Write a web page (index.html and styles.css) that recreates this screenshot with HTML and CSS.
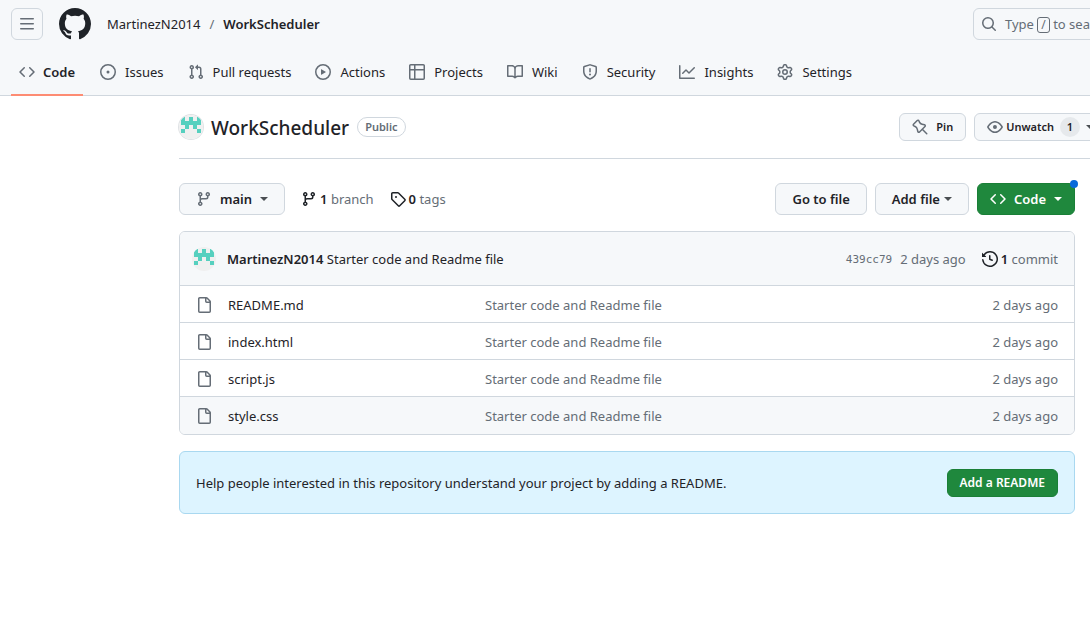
FILE: index.html
```html
<!DOCTYPE html>
<html lang="en">
<head>
<meta charset="utf-8">
<title>MartinezN2014/WorkScheduler</title>
<link rel="stylesheet" href="styles.css">
</head>
<body>
<svg class="sprite" aria-hidden="true">
  <symbol id="i-menu" viewBox="0 0 16 16"><path d="M1 2.75A.75.75 0 0 1 1.75 2h12.5a.75.75 0 0 1 0 1.5H1.75A.75.75 0 0 1 1 2.75Zm0 5A.75.75 0 0 1 1.75 7h12.5a.75.75 0 0 1 0 1.5H1.75A.75.75 0 0 1 1 7.75ZM1.75 12h12.5a.75.75 0 0 1 0 1.5H1.75a.75.75 0 0 1 0-1.5Z"/></symbol>
  <symbol id="i-mark" viewBox="0 0 16 16"><path d="M8 0c4.42 0 8 3.58 8 8a8.013 8.013 0 0 1-5.45 7.59c-.4.08-.55-.17-.55-.38 0-.27.01-1.13.01-2.2 0-.75-.25-1.23-.54-1.48 1.78-.2 3.65-.88 3.65-3.95 0-.88-.31-1.59-.82-2.15.08-.2.36-1.02-.08-2.12 0 0-.67-.22-2.2.82-.64-.18-1.32-.27-2-.27-.68 0-1.36.09-2 .27-1.53-1.03-2.2-.82-2.2-.82-.44 1.1-.16 1.92-.08 2.12-.51.56-.82 1.28-.82 2.15 0 3.06 1.86 3.75 3.64 3.95-.23.2-.44.55-.51 1.07-.46.21-1.61.55-2.33-.66-.15-.24-.6-.83-1.23-.82-.67.01-.27.38.01.53.34.19.73.9.82 1.13.16.45.68 1.31 2.69.94 0 .67.01 1.3.01 1.49 0 .21-.15.45-.55.38A7.995 7.995 0 0 1 0 8c0-4.42 3.58-8 8-8Z"/></symbol>
  <symbol id="i-code" viewBox="0 0 16 16"><path d="m11.28 3.22 4.25 4.25a.75.75 0 0 1 0 1.06l-4.25 4.25a.749.749 0 0 1-1.275-.326.749.749 0 0 1 .215-.734L13.94 8l-3.72-3.72a.749.749 0 0 1 .326-1.275.749.749 0 0 1 .734.215Zm-6.56 0a.751.751 0 0 1 1.042.018.751.751 0 0 1 .018 1.042L2.06 8l3.72 3.72a.749.749 0 0 1-.326 1.275.749.749 0 0 1-.734-.215L.47 8.53a.75.75 0 0 1 0-1.06Z"/></symbol>
  <symbol id="i-issue" viewBox="0 0 16 16"><path d="M8 9.5a1.5 1.5 0 1 0 0-3 1.5 1.5 0 0 0 0 3Z"/><path d="M8 0a8 8 0 1 1 0 16A8 8 0 0 1 8 0ZM1.5 8a6.5 6.5 0 1 0 13 0 6.5 6.5 0 0 0-13 0Z"/></symbol>
  <symbol id="i-pull" viewBox="0 0 16 16"><path d="M1.5 3.25a2.25 2.25 0 1 1 3 2.122v5.256a2.251 2.251 0 1 1-1.5 0V5.372A2.25 2.25 0 0 1 1.5 3.25Zm5.677-.177L9.573.677A.25.25 0 0 1 10 .854V2.5h1A2.5 2.5 0 0 1 13.5 5v5.628a2.251 2.251 0 1 1-1.5 0V5a1 1 0 0 0-1-1h-1v1.646a.25.25 0 0 1-.427.177L7.177 3.427a.25.25 0 0 1 0-.354ZM3.75 2.5a.75.75 0 1 0 0 1.5.75.75 0 0 0 0-1.5Zm0 9.5a.75.75 0 1 0 0 1.5.75.75 0 0 0 0-1.5Zm8.25.75a.75.75 0 1 0 1.5 0 .75.75 0 0 0-1.5 0Z"/></symbol>
  <symbol id="i-play" viewBox="0 0 16 16"><path d="M8 0a8 8 0 1 1 0 16A8 8 0 0 1 8 0ZM1.5 8a6.5 6.5 0 1 0 13 0 6.5 6.5 0 0 0-13 0Zm4.879-2.773 4.264 2.559a.25.25 0 0 1 0 .428l-4.264 2.559A.25.25 0 0 1 6 10.559V5.442a.25.25 0 0 1 .379-.215Z"/></symbol>
  <symbol id="i-table" viewBox="0 0 16 16"><path d="M0 1.75C0 .784.784 0 1.75 0h12.5C15.216 0 16 .784 16 1.75v12.5A1.75 1.75 0 0 1 14.25 16H1.75A1.75 1.75 0 0 1 0 14.25ZM6.5 6.5v8h7.75a.25.25 0 0 0 .25-.25V6.5Zm8-1.5V1.75a.25.25 0 0 0-.25-.25H6.5V5Zm-13 1.5v7.75c0 .138.112.25.25.25H5v-8ZM5 5V1.5H1.75a.25.25 0 0 0-.25.25V5Z"/></symbol>
  <symbol id="i-book" viewBox="0 0 16 16"><path d="M0 1.75A.75.75 0 0 1 .75 1h4.253c1.227 0 2.317.59 3 1.501A3.743 3.743 0 0 1 11.006 1h4.245a.75.75 0 0 1 .75.75v10.5a.75.75 0 0 1-.75.75h-4.507a2.25 2.25 0 0 0-1.591.659l-.622.621a.75.75 0 0 1-1.06 0l-.622-.621A2.25 2.25 0 0 0 5.258 13H.75a.75.75 0 0 1-.75-.75Zm7.251 10.324.004-5.073-.002-2.253A2.25 2.25 0 0 0 5.003 2.5H1.5v9h3.757a3.75 3.75 0 0 1 1.994.574ZM8.755 4.75l-.004 7.322a3.752 3.752 0 0 1 1.992-.572H14.5v-9h-3.495a2.25 2.25 0 0 0-2.25 2.25Z"/></symbol>
  <symbol id="i-shield" viewBox="0 0 16 16"><path d="M7.467.133a1.748 1.748 0 0 1 1.066 0l5.25 1.68A1.75 1.75 0 0 1 15 3.48V7c0 1.566-.32 3.182-1.303 4.682-.983 1.498-2.585 2.813-5.032 3.855a1.697 1.697 0 0 1-1.33 0c-2.447-1.042-4.049-2.357-5.032-3.855C1.32 10.182 1 8.566 1 7V3.48a1.75 1.75 0 0 1 1.217-1.667Zm.61 1.429a.25.25 0 0 0-.153 0l-5.25 1.68a.25.25 0 0 0-.174.238V7c0 1.358.275 2.666 1.057 3.86.784 1.194 2.121 2.34 4.366 3.297a.196.196 0 0 0 .154 0c2.245-.956 3.582-2.104 4.366-3.298C13.225 9.666 13.5 8.36 13.5 7V3.48a.251.251 0 0 0-.174-.237l-5.25-1.68ZM8.75 4.75v3a.75.75 0 0 1-1.5 0v-3a.75.75 0 0 1 1.5 0ZM9 10.5a1 1 0 1 1-2 0 1 1 0 0 1 2 0Z"/></symbol>
  <symbol id="i-graph" viewBox="0 0 16 16"><path d="M1.5 1.75V13.5h13.75a.75.75 0 0 1 0 1.5H.75a.75.75 0 0 1-.75-.75V1.75a.75.75 0 0 1 1.5 0Zm14.28 2.53-5.25 5.25a.75.75 0 0 1-1.06 0L7 7.06 4.28 9.78a.751.751 0 0 1-1.042-.018.751.751 0 0 1-.018-1.042l3.25-3.25a.75.75 0 0 1 1.06 0L10 7.94l4.72-4.72a.751.751 0 0 1 1.042.018.751.751 0 0 1 .018 1.042Z"/></symbol>
  <symbol id="i-gear" viewBox="0 0 16 16"><path d="M8 0a8.2 8.2 0 0 1 .701.031C9.444.095 9.99.645 10.16 1.29l.288 1.107c.018.066.079.158.212.224.231.114.454.243.668.386.123.082.233.09.299.071l1.103-.303c.644-.176 1.392.021 1.82.63.27.385.506.792.704 1.218.315.675.111 1.422-.364 1.891l-.814.806c-.049.048-.098.147-.088.294.016.257.016.515 0 .772-.01.147.038.246.088.294l.814.806c.475.469.679 1.216.364 1.891a7.977 7.977 0 0 1-.704 1.217c-.428.61-1.176.807-1.82.63l-1.102-.302c-.067-.019-.177-.011-.3.071a5.909 5.909 0 0 1-.668.386c-.133.066-.194.158-.211.224l-.29 1.106c-.168.646-.715 1.196-1.458 1.26a8.006 8.006 0 0 1-1.402 0c-.743-.064-1.289-.614-1.458-1.26l-.289-1.106c-.018-.066-.079-.158-.212-.224a5.738 5.738 0 0 1-.668-.386c-.123-.082-.233-.09-.299-.071l-1.103.303c-.644.176-1.392-.021-1.82-.63a8.12 8.12 0 0 1-.704-1.218c-.315-.675-.111-1.422.363-1.891l.815-.806c.05-.048.098-.147.088-.294a6.214 6.214 0 0 1 0-.772c.01-.147-.038-.246-.088-.294l-.815-.806C.635 6.045.431 5.298.746 4.623a7.92 7.92 0 0 1 .704-1.217c.428-.61 1.176-.807 1.82-.63l1.102.302c.067.019.177.011.3-.071.214-.143.437-.272.668-.386.133-.066.194-.158.211-.224l.29-1.106C6.009.645 6.556.095 7.299.03 7.53.01 7.764 0 8 0Zm-.571 1.525c-.036.003-.108.036-.137.146l-.289 1.105c-.147.561-.549.967-.998 1.189-.173.086-.34.183-.5.29-.417.278-.97.423-1.529.27l-1.103-.303c-.109-.03-.175.016-.195.045-.22.312-.412.644-.573.99-.014.031-.021.11.059.19l.815.806c.411.406.562.957.53 1.456a4.709 4.709 0 0 0 0 .582c.032.499-.119 1.05-.53 1.456l-.815.806c-.081.08-.073.159-.059.19.162.346.353.677.573.989.02.03.085.076.195.046l1.102-.303c.56-.153 1.113-.008 1.53.27.161.107.328.204.501.29.447.222.85.629.997 1.189l.289 1.105c.029.109.101.143.137.146a6.6 6.6 0 0 0 1.142 0c.036-.003.108-.036.137-.146l.289-1.105c.147-.561.549-.967.998-1.189.173-.086.34-.183.5-.29.417-.278.97-.423 1.529-.27l1.103.303c.109.029.175-.016.195-.045.22-.313.411-.644.573-.99.014-.031.021-.11-.059-.19l-.815-.806c-.411-.406-.562-.957-.53-1.456a4.709 4.709 0 0 0 0-.582c-.032-.499.119-1.05.53-1.456l.815-.806c.081-.08.073-.159.059-.19a6.464 6.464 0 0 0-.573-.989c-.02-.03-.085-.076-.195-.046l-1.102.303c-.56.153-1.113.008-1.53-.27a4.44 4.44 0 0 0-.501-.29c-.447-.222-.85-.629-.997-1.189l-.289-1.105c-.029-.11-.101-.143-.137-.146a6.6 6.6 0 0 0-1.142 0ZM11 8a3 3 0 1 1-6 0 3 3 0 0 1 6 0ZM9.5 8a1.5 1.5 0 1 0-3.001.001A1.5 1.5 0 0 0 9.5 8Z"/></symbol>
  <symbol id="i-search" viewBox="0 0 16 16"><path d="M10.68 11.74a6 6 0 0 1-7.922-8.982 6 6 0 0 1 8.982 7.922l3.04 3.04a.749.749 0 0 1-.326 1.275.749.749 0 0 1-.734-.215ZM11.5 7a4.499 4.499 0 1 0-8.997 0A4.499 4.499 0 0 0 11.5 7Z"/></symbol>
  <symbol id="i-pin" viewBox="0 0 16 16"><path d="m11.294.984 3.722 3.722a1.75 1.75 0 0 1-.504 2.826l-1.327.613a3.089 3.089 0 0 0-1.707 2.084l-.584 2.454c-.317 1.332-1.972 1.8-2.94.832L5.75 11.311 1.78 15.28a.749.749 0 1 1-1.06-1.06l3.969-3.97-2.204-2.204c-.968-.968-.5-2.623.832-2.94l2.454-.584a3.08 3.08 0 0 0 2.084-1.707l.613-1.327a1.75 1.75 0 0 1 2.826-.504ZM6.283 9.723l2.732 2.731a.25.25 0 0 0 .42-.119l.584-2.454a4.586 4.586 0 0 1 2.537-3.098l1.328-.613a.25.25 0 0 0 .072-.404l-3.722-3.722a.25.25 0 0 0-.404.072l-.613 1.328a4.584 4.584 0 0 1-3.098 2.537l-2.454.584a.25.25 0 0 0-.119.42l2.731 2.732Z"/></symbol>
  <symbol id="i-eye" viewBox="0 0 16 16"><path d="M8 2c1.981 0 3.671.992 4.933 2.078 1.27 1.091 2.187 2.345 2.637 3.023a1.62 1.62 0 0 1 0 1.798c-.45.678-1.367 1.932-2.637 3.023C11.67 13.008 9.981 14 8 14c-1.981 0-3.671-.992-4.933-2.078C1.797 10.83.88 9.576.43 8.898a1.62 1.62 0 0 1 0-1.798c.45-.677 1.367-1.931 2.637-3.022C4.33 2.992 6.019 2 8 2ZM1.679 7.932a.12.12 0 0 0 0 .136c.411.622 1.241 1.75 2.366 2.717C5.176 11.758 6.527 12.5 8 12.5c1.473 0 2.825-.742 3.955-1.715 1.124-.967 1.954-2.096 2.366-2.717a.12.12 0 0 0 0-.136c-.412-.621-1.242-1.75-2.366-2.717C10.824 4.242 9.473 3.5 8 3.5c-1.473 0-2.825.742-3.955 1.715-1.124.967-1.954 2.096-2.366 2.717ZM8 10a2 2 0 1 1-.001-3.999A2 2 0 0 1 8 10Z"/></symbol>
  <symbol id="i-branch" viewBox="0 0 16 16"><path d="M9.5 3.25a2.25 2.25 0 1 1 3 2.122V6A2.5 2.5 0 0 1 10 8.5H6a1 1 0 0 0-1 1v1.128a2.251 2.251 0 1 1-1.5 0V5.372a2.25 2.25 0 1 1 1.5 0v1.836A2.493 2.493 0 0 1 6 7h4a1 1 0 0 0 1-1v-.628A2.25 2.25 0 0 1 9.5 3.25Zm-6 0a.75.75 0 1 0 1.5 0 .75.75 0 0 0-1.5 0Zm8.25-.75a.75.75 0 1 0 0 1.5.75.75 0 0 0 0-1.5ZM4.25 12a.75.75 0 1 0 0 1.5.75.75 0 0 0 0-1.5Z"/></symbol>
  <symbol id="i-tag" viewBox="0 0 16 16"><path d="M1 7.775V2.75C1 1.784 1.784 1 2.75 1h5.025c.464 0 .91.184 1.238.513l6.25 6.25a1.75 1.75 0 0 1 0 2.474l-5.026 5.026a1.75 1.75 0 0 1-2.474 0l-6.25-6.25A1.752 1.752 0 0 1 1 7.775Zm1.5 0c0 .066.026.13.073.177l6.25 6.25a.25.25 0 0 0 .354 0l5.025-5.025a.25.25 0 0 0 0-.354l-6.25-6.25a.25.25 0 0 0-.177-.073H2.75a.25.25 0 0 0-.25.25ZM6 5a1 1 0 1 1 0 2 1 1 0 0 1 0-2Z"/></symbol>
  <symbol id="i-history" viewBox="0 0 16 16"><path d="m.427 1.927 1.215 1.215a8.002 8.002 0 1 1-1.6 5.685.75.75 0 1 1 1.493-.154 6.5 6.5 0 1 0 1.18-4.458l1.358 1.358A.25.25 0 0 1 3.896 6H.25A.25.25 0 0 1 0 5.75V2.104a.25.25 0 0 1 .427-.177ZM7.75 4a.75.75 0 0 1 .75.75v2.992l2.028.812a.75.75 0 0 1-.557 1.392l-2.5-1A.751.751 0 0 1 7 8.25v-3.5A.75.75 0 0 1 7.75 4Z"/></symbol>
  <symbol id="i-file" viewBox="0 0 16 16"><path d="M2 1.75C2 .784 2.784 0 3.75 0h6.586c.464 0 .909.184 1.237.513l2.914 2.914c.329.328.513.773.513 1.237v9.586A1.75 1.75 0 0 1 13.25 16h-9.5A1.75 1.75 0 0 1 2 14.25Zm1.75-.25a.25.25 0 0 0-.25.25v12.5c0 .138.112.25.25.25h9.5a.25.25 0 0 0 .25-.25V6h-2.75A1.75 1.75 0 0 1 9 4.25V1.5Zm6.75.062V4.25c0 .138.112.25.25.25h2.688l-.011-.013-2.914-2.914-.013-.011Z"/></symbol>
  <symbol id="i-avatar" viewBox="0 0 12 12"><path fill="#f0f0f0" d="M0 0h12v12H0z"/><path fill="#56d0bf" d="M1 1h2v2H1zM5 1h2v2H5zM9 1h2v2H9zM1 3h10v2H1zM3 5h2v2H3zM7 5h2v2H7zM1 7h2v2H1zM9 7h2v2H9z"/></symbol>
</svg>

<header class="top">
  <div class="bar">
    <button class="menu" aria-label="Open menu"><svg class="icon"><use href="#i-menu"/></svg></button>
    <a class="mark" href="#" aria-label="Homepage"><svg><use href="#i-mark"/></svg></a>
    <nav class="crumbs" aria-label="Breadcrumb"><a href="#">MartinezN2014</a><span class="slash">/</span><a class="strong" href="#">WorkScheduler</a></nav>
    <button class="search"><svg class="icon"><use href="#i-search"/></svg><span>Type <kbd>/</kbd> to search</span></button>
  </div>
  <nav class="tabs" aria-label="Repository">
    <a class="tab current" href="#"><svg class="icon"><use href="#i-code"/></svg>Code</a>
    <a class="tab" href="#"><svg class="icon"><use href="#i-issue"/></svg>Issues</a>
    <a class="tab" href="#"><svg class="icon"><use href="#i-pull"/></svg>Pull requests</a>
    <a class="tab" href="#"><svg class="icon"><use href="#i-play"/></svg>Actions</a>
    <a class="tab" href="#"><svg class="icon"><use href="#i-table"/></svg>Projects</a>
    <a class="tab" href="#"><svg class="icon"><use href="#i-book"/></svg>Wiki</a>
    <a class="tab" href="#"><svg class="icon"><use href="#i-shield"/></svg>Security</a>
    <a class="tab" href="#"><svg class="icon"><use href="#i-graph"/></svg>Insights</a>
    <a class="tab" href="#"><svg class="icon"><use href="#i-gear"/></svg>Settings</a>
  </nav>
</header>

<main class="page">
  <div class="title">
    <svg class="avatar"><use href="#i-avatar"/></svg>
    <h1><a href="#">WorkScheduler</a></h1>
    <span class="label">Public</span>
    <div class="actions">
      <button class="btn small pin"><svg class="icon flip"><use href="#i-pin"/></svg>Pin</button>
      <button class="btn small watch"><svg class="icon"><use href="#i-eye"/></svg>Unwatch<span class="count">1</span><span class="caret"></span></button>
    </div>
  </div>

  <div class="content">
    <div class="tools">
      <button class="btn branch"><svg class="icon"><use href="#i-branch"/></svg>main<span class="caret"></span></button>
      <a class="stat" href="#"><svg class="icon"><use href="#i-branch"/></svg><span><b>1</b> branch</span></a>
      <a class="stat" href="#"><svg class="icon"><use href="#i-tag"/></svg><span><b>0</b> tags</span></a>
      <div class="right">
        <button class="btn">Go to file</button>
        <button class="btn add">Add file<span class="caret"></span></button>
        <button class="btn green code"><svg class="icon"><use href="#i-code"/></svg>Code<span class="caret"></span><span class="dot"></span></button>
      </div>
    </div>

    <section class="box" aria-label="Files">
      <div class="commit">
        <svg class="avatar mini"><use href="#i-avatar"/></svg>
        <div class="message"><a class="strong" href="#">MartinezN2014</a> <a href="#">Starter code and Readme file</a></div>
        <a class="sha" href="#">439cc79</a>
        <span class="muted">2 days ago</span>
        <a class="stat" href="#"><svg class="icon"><use href="#i-history"/></svg><span><b>1</b> commit</span></a>
      </div>
      <table class="files">
        <tr><td class="kind"><svg class="icon"><use href="#i-file"/></svg></td><td class="name"><a href="#">README.md</a></td><td class="muted">Starter code and Readme file</td><td class="age">2 days ago</td></tr>
        <tr><td class="kind"><svg class="icon"><use href="#i-file"/></svg></td><td class="name"><a href="#">index.html</a></td><td class="muted">Starter code and Readme file</td><td class="age">2 days ago</td></tr>
        <tr><td class="kind"><svg class="icon"><use href="#i-file"/></svg></td><td class="name"><a href="#">script.js</a></td><td class="muted">Starter code and Readme file</td><td class="age">2 days ago</td></tr>
        <tr class="active"><td class="kind"><svg class="icon"><use href="#i-file"/></svg></td><td class="name"><a href="#">style.css</a></td><td class="muted">Starter code and Readme file</td><td class="age">2 days ago</td></tr>
      </table>
    </section>

    <section class="notice">
      <p>Help people interested in this repository understand your project by adding a README.</p>
      <button class="btn small green readme">Add a README</button>
    </section>
  </div>
</main>
</body>
</html>
```
FILE: styles.css
```css
* { box-sizing: border-box; }
body {
  margin: 0;
  overflow-x: hidden;
  background: #fff;
  color: #1f2328;
  font: 13px/20px "Noto Sans", "Open Sans", sans-serif;
}
a { color: inherit; text-decoration: none; }
button { font: inherit; color: inherit; cursor: pointer; }
.sprite { position: absolute; width: 0; height: 0; }
.icon { flex: none; width: 16px; height: 16px; fill: #656d76; }
.strong, b { font-weight: 600; }
b { color: #1f2328; }
.muted { color: #656d76; }

.top { background: #f6f8fa; border-bottom: 1px solid #d0d7de; }
.bar { display: flex; align-items: center; height: 48px; padding-left: 11px; overflow: hidden; }
.menu {
  display: grid; place-items: center;
  width: 32px; height: 32px; padding: 0;
  background: none; border: 1px solid #d0d7de; border-radius: 6px;
}
.mark { margin: 0 16px; height: 32px; }
.mark svg { width: 32px; height: 32px; fill: #1f2328; }
.crumbs { display: flex; gap: 9px; }
.slash { color: #656d76; }
.search {
  display: flex; align-items: center; gap: 8px; flex: none;
  width: 320px; height: 32px; margin: 0 -203px 0 auto; padding: 0 7px;
  background: none; border: 1px solid #d0d7de; border-radius: 6px;
  color: #656d76;
}
kbd {
  font: inherit; font-size: 12px; line-height: 14px; display: inline-block;
  padding: 0 3px; border: 1px solid #656d76; border-radius: 3px;
}
.tabs { display: flex; gap: 8px; height: 48px; padding-left: 11px; margin-bottom: -1px; }
.tab {
  display: flex; align-items: center; gap: 9px;
  padding: 2px 8px 0; border-bottom: 2px solid transparent; white-space: nowrap;
}
.current { gap: 8px; border-color: #fd8c73; font-weight: 600; }
.current + .tab { margin-left: 1px; }

.page { padding: 16px 15px 0 179px; }
.title {
  display: flex; align-items: center; gap: 8px;
  height: 47px; padding-bottom: 16px; margin-right: -15px;
  border-bottom: 1px solid #d0d7de;
}
.avatar { flex: none; width: 24px; height: 24px; border-radius: 50%; box-shadow: 0 0 0 1px #dfe2e5; }
.mini { box-shadow: none; }
h1 { margin: 0; padding-top: 2px; font-size: 19px; line-height: 28px; font-weight: 500; }
.label {
  padding: 0 7px; border: 1px solid #d0d7de; border-radius: 10px;
  color: #656d76; font-size: 11px; line-height: 18px; font-weight: 600;
}
.actions { display: flex; gap: 8px; margin-left: auto; margin-right: -17px; }

.btn {
  display: flex; align-items: center; justify-content: center; gap: 8px;
  height: 32px; padding: 0 16px; white-space: nowrap;
  background: #f6f8fa; border: 1px solid #d0d7de; border-radius: 6px;
  font-weight: 600;
}
.small { height: 28px; padding: 0 12px; font-size: 11px; }
.watch { gap: 3px; }
.flip { transform: scaleX(-1); }
.count {
  min-width: 20px; margin: 0 3px; border-radius: 10px;
  background: #e6e9ec; line-height: 20px;
}
.caret { border: 4px solid transparent; border-top-color: currentColor; border-bottom: 0; opacity: .8; }
.add { gap: 4px; }
.green { background: #1f883d; border-color: #1a7f37; color: #fff; font-weight: 600; }
.green .icon { fill: #fff; }
.green .caret { opacity: 1; }
.readme { font-size: 12px; }
.code { position: relative; padding: 0 12px; }
.dot {
  position: absolute; top: -4px; right: -4px;
  width: 8px; height: 8px; border-radius: 50%; background: #0969da;
}

.content { padding-top: 24px; }
.tools { display: flex; align-items: center; gap: 16px; }
.right { display: flex; gap: 8px; margin-left: auto; }
.stat { display: flex; align-items: center; gap: 3px; color: #656d76; }
.stat .icon { fill: #1f2328; }

.box { margin: 16px 0; border: 1px solid #d0d7de; border-radius: 6px; overflow: hidden; }
.commit { display: flex; align-items: center; gap: 8px; height: 53px; padding: 0 16px 0 12px; background: #f6f8fa; }
.message { flex: 1; margin-left: 3px; }
.sha { padding-top: 2px; color: #656d76; font: 11px/20px "DejaVu Sans Mono", monospace; }
.commit .stat { margin-left: 8px; }
.files { width: 100%; border-collapse: collapse; table-layout: fixed; }
.files td { height: 37px; padding: 2px 0 0; border-top: 1px solid #d0d7de; }
.files .kind { width: 48px; padding-left: 16px; }
.kind .icon { display: block; }
.name { width: 257px; }
.files .age { width: 160px; padding-right: 16px; text-align: right; color: #656d76; }
.active { background: #f6f8fa; }

.notice {
  display: flex; align-items: center; justify-content: space-between;
  padding: 17px 16px 16px; background: #ddf4ff; border: 1px solid #a9d8f0; border-radius: 6px;
}
.notice p { margin: 0; line-height: 28px; }
```
